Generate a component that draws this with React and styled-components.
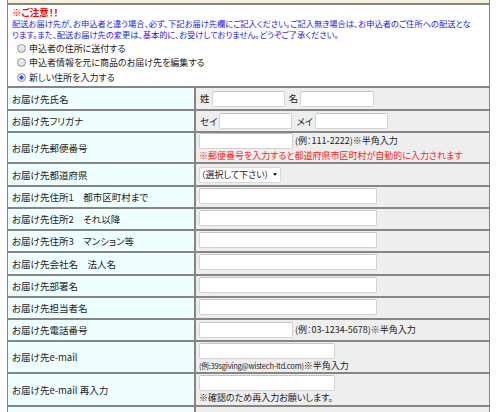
import React from 'react';
import styled, { createGlobalStyle } from 'styled-components';

const GlobalStyle = createGlobalStyle`
  body {
    margin: 0;
    background: #ffffff;
    font-family: "Noto Sans CJK JP", "Noto Sans", sans-serif;
    font-feature-settings: "palt";
  }
`;

const Page = styled.div`
  padding-left: 7px;
`;

const Table = styled.table`
  width: 483px;
  border-collapse: separate;
  border-spacing: 0;
  table-layout: fixed;
  font-size: 9.5px;
  color: #222;
`;

const Col = styled.col`
  width: ${(p) => p.$w}px;
`;

const Row = styled.tr`
  height: ${(p) => p.$h}px;
`;

const Strip = styled.td`
  height: 3px;
  padding: 0;
  background: #f6f2dd;
  border: 1px solid #858585;
  border-top: none;
`;

const NoticeCell = styled.td`
  background: #ffffff;
  border: 1px solid #858585;
  padding: 1px 4px 0;
  vertical-align: top;
`;

const NoticeTitle = styled.div`
  color: #ff0000;
  font-weight: bold;
  font-size: 9.5px;
  line-height: 12px;
`;

const NoticeText = styled.div`
  color: #1a1ae6;
  font-size: 8.25px;
  line-height: 11px;
  white-space: nowrap;
`;

const RadioList = styled.div`
  display: flex;
  flex-direction: column;
  padding: 1px 0 0 5px;
`;

const RadioRow = styled.label`
  display: flex;
  align-items: center;
  gap: 3px;
  height: 14.5px;
  font-size: 9px;
  color: #222;
`;

const RadioDot = styled.span`
  width: 9px;
  height: 9px;
  box-sizing: border-box;
  border-radius: 50%;
  border: 1px solid #8f8f8f;
  background: ${(p) =>
    p.$checked
      ? 'radial-gradient(circle, #2b5fd9 0 1.8px, #e8eef8 2.3px)'
      : 'linear-gradient(#f2f2f2, #dcdcdc)'};
`;

const Label = styled.td`
  background: #eefefe;
  border: 1px solid #858585;
  padding: 0 4px;
  vertical-align: middle;
  white-space: nowrap;
`;

const Value = styled.td`
  background: #eeeeee;
  border: 1px solid #858585;
  padding: 0 3px;
  vertical-align: middle;
  white-space: nowrap;
`;

const Line = styled.div`
  display: flex;
  align-items: center;
  gap: 2px;
  line-height: 11px;
`;

const Prefix = styled.span`
  margin-left: ${(p) => p.$ml || 0}px;
`;

const TextInput = styled.span`
  display: inline-block;
  width: ${(p) => p.$w}px;
  height: 16px;
  box-sizing: border-box;
  background: #ffffff;
  border: 1px solid #d2d2d2;
  border-top-color: #c4c4c4;
  border-radius: 2px;
`;

const Hint = styled.span`
  color: #222;
  font-size: 9px;
  line-height: 12px;
`;

const SmallLatin = styled.span`
  font-size: 7.5px;
  letter-spacing: -0.2px;
`;

const RedNote = styled.div`
  color: #ff1a1a;
  font-size: 9px;
  line-height: 12px;
`;

const Select = styled.span`
  display: inline-flex;
  align-items: center;
  justify-content: space-between;
  width: 82px;
  height: 16px;
  box-sizing: border-box;
  padding: 0 3px 0 1px;
  background: #ffffff;
  border: 1px solid #d8d8d8;
  border-radius: 2px;
  font-size: 9px;
  &::after {
    content: '';
    border-left: 2.5px solid transparent;
    border-right: 2.5px solid transparent;
    border-top: 3px solid #222;
  }
`;

const Stack = styled.div`
  display: flex;
  flex-direction: column;
  gap: 1px;
`;

const addressRows = [
  'お届け先住所1\u3000都市区町村まで',
  'お届け先住所2\u3000それ以降',
  'お届け先住所3\u3000マンション等',
  'お届け先会社名\u3000法人名',
  'お届け先部署名',
  'お届け先担当者名',
];

const addressHeights = [22, 22, 22, 23, 22, 22];

export default function App() {
  return (
    <Page>
      <GlobalStyle />
      <Table>
        <colgroup>
          <Col $w={188} />
          <Col $w={295} />
        </colgroup>
        <tbody>
          <Row $h={4}>
            <Strip colSpan={2} />
          </Row>
          <Row $h={83}>
            <NoticeCell colSpan={2}>
              <NoticeTitle>※ご注意！！</NoticeTitle>
              <NoticeText>
                配送お届け先が、お申込者と違う場合、必ず、下記お届け先欄にご記入ください。ご記入無き場合は、お申込者のご住所への配送とな
                <br />
                ります。また、配送お届け先の変更は、基本的に、お受けしておりません。どうぞご了承ください。
              </NoticeText>
              <RadioList>
                <RadioRow>
                  <RadioDot />
                  申込者の住所に送付する
                </RadioRow>
                <RadioRow>
                  <RadioDot />
                  申込者情報を元に商品のお届け先を編集する
                </RadioRow>
                <RadioRow>
                  <RadioDot $checked />
                  新しい住所を入力する
                </RadioRow>
              </RadioList>
            </NoticeCell>
          </Row>
          <Row $h={23}>
            <Label>お届け先氏名</Label>
            <Value>
              <Line>
                <Prefix $ml={1}>姓</Prefix>
                <TextInput $w={73} />
                <Prefix $ml={2}>名</Prefix>
                <TextInput $w={74} />
              </Line>
            </Value>
          </Row>
          <Row $h={22}>
            <Label>お届け先フリガナ</Label>
            <Value>
              <Line>
                <Prefix $ml={1}>セイ</Prefix>
                <TextInput $w={73} />
                <Prefix $ml={2}>メイ</Prefix>
                <TextInput $w={73} />
              </Line>
            </Value>
          </Row>
          <Row $h={31}>
            <Label>お届け先郵便番号</Label>
            <Value>
              <Stack>
                <Line>
                  <TextInput $w={94} />
                  <Hint>(例：111-2222)※半角入力</Hint>
                </Line>
                <RedNote>※郵便番号を入力すると都道府県市区町村が自動的に入力されます</RedNote>
              </Stack>
            </Value>
          </Row>
          <Row $h={23}>
            <Label>お届け先都道府県</Label>
            <Value>
              <Select>（選択して下さい）</Select>
            </Value>
          </Row>
          {addressRows.map((text, i) => (
            <Row $h={addressHeights[i]} key={text}>
              <Label>{text}</Label>
              <Value>
                <TextInput $w={178} />
              </Value>
            </Row>
          ))}
          <Row $h={22}>
            <Label>お届け先電話番号</Label>
            <Value>
              <Line>
                <TextInput $w={94} />
                <Hint>(例：03-1234-5678)※半角入力</Hint>
              </Line>
            </Value>
          </Row>
          <Row $h={32}>
            <Label>お届け先e-mail</Label>
            <Value>
              <Stack>
                <TextInput $w={136} />
                <Hint>
                  <SmallLatin>(例:39sgiving@wistech-ltd.com)</SmallLatin>※半角入力
                </Hint>
              </Stack>
            </Value>
          </Row>
          <Row $h={33}>
            <Label>お届け先e-mail 再入力</Label>
            <Value>
              <Stack>
                <TextInput $w={136} />
                <Hint>※確認のため再入力お願いします。</Hint>
              </Stack>
            </Value>
          </Row>
          <Row $h={22}>
            <Label />
            <Value />
          </Row>
        </tbody>
      </Table>
    </Page>
  );
}
